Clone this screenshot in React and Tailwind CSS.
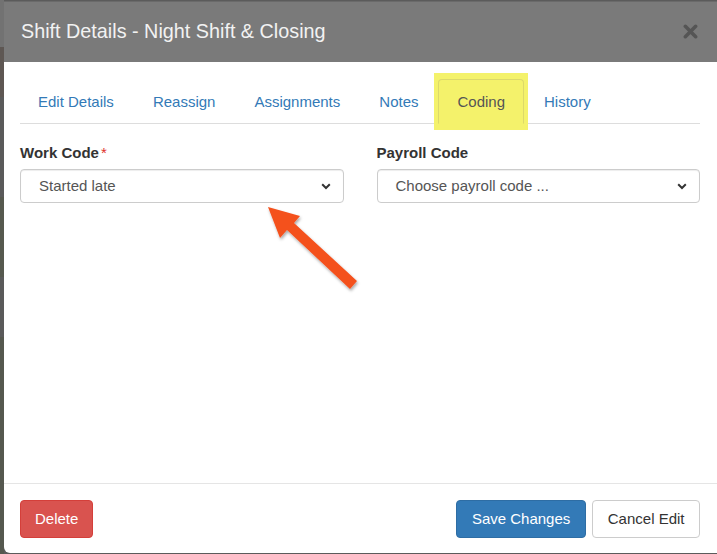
import React from "react";

const Chevron = () => (
  <svg width="10" height="7" viewBox="0 0 10 7" className="shrink-0">
    <path d="M1.2 1.3 L5 5 L8.8 1.3" fill="none" stroke="#333" strokeWidth="2" />
  </svg>
);

function Tab({ label, active }) {
  if (active) {
    return (
      <div className="relative mr-[1px] -mb-px">
        <div className="absolute left-[-4px] right-[-4px] top-[-6px] bottom-[-6px] bg-[#f4f26b] z-10" />
        <div className="relative z-20 px-[18px] py-[11px] border border-[#dcd96a] border-b-transparent rounded-t-[4px] text-[#555] leading-[21px]">
          {label}
        </div>
      </div>
    );
  }
  return (
    <div className="mr-[1px] -mb-px px-[18px] py-[11px] border border-transparent text-[#337ab7] leading-[21px]">
      {label}
    </div>
  );
}

function Select({ value }) {
  return (
    <div className="h-[34px] border border-[#ccc] rounded-[4px] bg-white flex items-center pl-[18px] pr-[12px] pt-[1px] text-[#555] shadow-[inset_0_1px_1px_rgba(0,0,0,0.075)]">
      <span className="flex-1">{value}</span>
      <Chevron />
    </div>
  );
}

export default function App() {
  return (
    <div
      className="relative w-[717px] h-[554px] overflow-hidden bg-[#5b5b5b] flex text-[15px]"
      style={{ fontFamily: '"Liberation Sans", Arial, sans-serif' }}
    >
      {/* background strip */}
      <div className="w-[4px] flex flex-col shrink-0">
        <div className="h-[47px] bg-[#727272]" />
        <div className="h-[50px] bg-[#5e5753]" />
        <div className="h-[100px] bg-[#5a5a5a]" />
        <div className="h-[80px] bg-[#56594f]" />
        <div className="h-[60px] bg-[#5a5a5a]" />
        <div className="flex-1 bg-[#55584f]" />
      </div>
      <div className="flex-1 flex flex-col bg-white rounded-bl-[6px] mt-[1px] mb-[1px]">
        {/* header */}
        <div className="h-[61px] bg-[#7a7a7a] flex items-center pl-[17px] pr-[19px] border-t border-[#6a6a6a]">
          <div className="flex-1 text-[19.8px] text-[#f2f2f2]">Shift Details - Night Shift &amp; Closing</div>
          <svg width="15" height="15" viewBox="0 0 16 16" className="mb-[2px]">
            <path d="M2.5 2.5 L13.5 13.5 M13.5 2.5 L2.5 13.5" stroke="#555" strokeWidth="3.8" strokeLinecap="round" />
          </svg>
        </div>
        {/* body */}
        <div className="flex-1 pl-[16px] pr-[17px] pt-[17px]">
          <div className="flex border-b border-[#ddd] pl-0">
            <div className="-ml-[1px] flex">
              <Tab label="Edit Details" />
              <Tab label="Reassign" />
              <Tab label="Assignments" />
              <Tab label="Notes" />
              <Tab label="Coding" active />
              <Tab label="History" />
            </div>
          </div>
          <div className="grid grid-cols-2 gap-[33px] mt-[19px]">
            <div>
              <div className="font-bold text-[#333] leading-[20px] mb-[6px]">
                Work Code<span className="text-[#e0312b] font-normal ml-[2px]">*</span>
              </div>
              <Select value="Started late" />
            </div>
            <div>
              <div className="font-bold text-[#333] leading-[20px] mb-[6px]">Payroll Code</div>
              <Select value="Choose payroll code ..." />
            </div>
          </div>
        </div>
        {/* footer */}
        <div className="border-t border-[#e5e5e5] pl-[16px] pr-[17px] pt-[16px] pb-[15px] flex items-center">
          <button className="h-[38px] px-[14px] rounded-[4px] bg-[#d9534f] border border-[#d43f3a] text-white">
            Delete
          </button>
          <div className="flex-1" />
          <button className="h-[38px] px-[15px] rounded-[4px] bg-[#337ab7] border border-[#2e6da4] text-white">
            Save Changes
          </button>
          <button className="h-[38px] px-[14.5px] ml-[6px] rounded-[4px] bg-white border border-[#ccc] text-[#333]">
            Cancel Edit
          </button>
        </div>
      </div>
      {/* annotation arrow */}
      <svg className="absolute inset-0 pointer-events-none" width="717" height="554" viewBox="0 0 717 554">
        <defs>
          <filter id="sh" x="-20%" y="-20%" width="140%" height="140%">
            <feDropShadow dx="1" dy="2" stdDeviation="1.5" floodColor="#000" floodOpacity="0.35" />
          </filter>
        </defs>
        <polygon
          points="268,207 300,216 294,223 357,281 350,289 287,230 280,238"
          fill="#f4511e"
          filter="url(#sh)"
        />
      </svg>
    </div>
  );
}
